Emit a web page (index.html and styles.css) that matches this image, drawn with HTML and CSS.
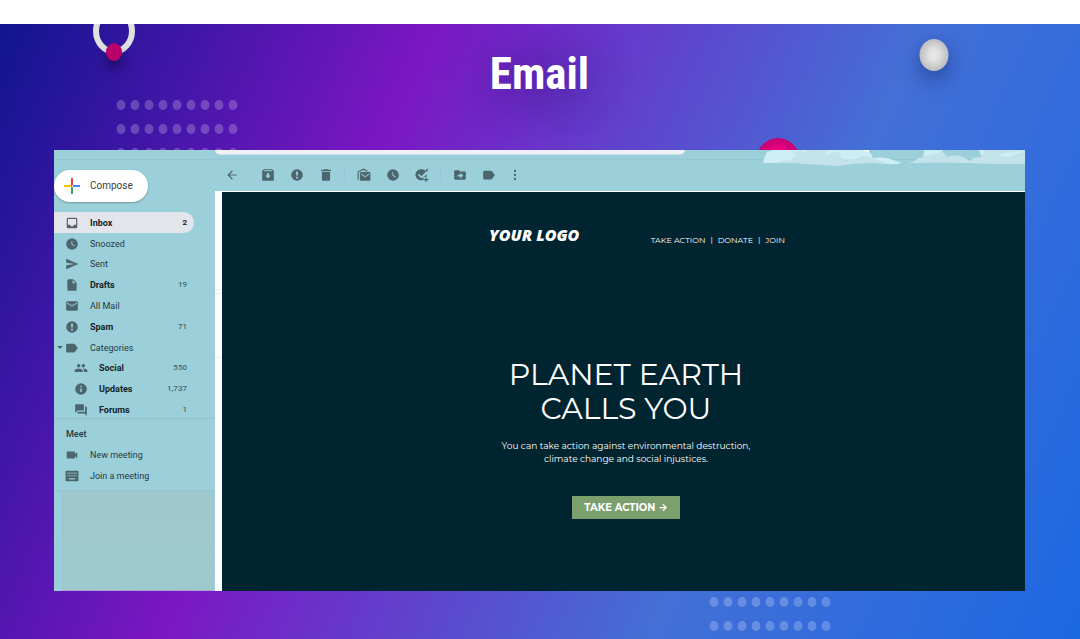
FILE: index.html
```html
<!DOCTYPE html>
<html lang="en">
<head>
<meta charset="utf-8">
<title>Email</title>
<link rel="stylesheet" href="styles.css">
</head>
<body>
<svg class="defs" aria-hidden="true">
  <defs>
    <symbol id="clock" viewBox="0 0 24 24"><path d="M12 2a10 10 0 1 0 0 20 10 10 0 0 0 0-20zm4.2 14.2L11 13V7h1.5v5.2l4.5 2.7z"/></symbol>
    <symbol id="alert" viewBox="0 0 24 24"><path d="M12 2a10 10 0 1 0 0 20 10 10 0 0 0 0-20zm1.500 16h-3v-3h3zm0-5h-3V6h3z"/></symbol>
    <symbol id="label" viewBox="0 0 24 24"><path d="M17 5.500A2 2 0 0 0 15.500 4.500H4a2 2 0 0 0-2 2v11a2 2 0 0 0 2 2h11.500c.6 0 1.200-.3 1.500-.8L22 12z"/></symbol>
    <pattern id="dots" width="14" height="24" patternUnits="userSpaceOnUse"><ellipse cx="5" cy="5" rx="4.400" ry="5" fill="#fff" fill-opacity=".22"/></pattern>
    <radialGradient id="pearl"><stop offset="0" stop-color="#eaeaea"/><stop offset=".4" stop-color="#dedede"/><stop offset="1" stop-color="#bdbdbd"/></radialGradient>
    <radialGradient id="ruby"><stop offset="0" stop-color="#ff008c"/><stop offset=".5" stop-color="#ed0084"/><stop offset="1" stop-color="#c20070"/></radialGradient>
  </defs>
</svg>
<main class="banner">
  <svg class="deco ring" width="60" height="60" viewBox="0 0 60 60" aria-hidden="true"><ellipse cx="30" cy="7" rx="18" ry="20.500" fill="none" stroke="#e0e0e0" stroke-width="6"/><ellipse class="drop" cx="30" cy="28" rx="8" ry="9" fill="#b80069"/></svg>
  <svg class="deco dots-top" width="126" height="60" aria-hidden="true"><rect width="126" height="60" fill="url(#dots)"/></svg>
  <svg class="deco dots-bottom" width="126" height="36" aria-hidden="true"><rect width="126" height="36" fill="url(#dots)"/></svg>
  <svg class="deco pearl" width="30" height="34" viewBox="0 0 30 34" aria-hidden="true"><ellipse cx="15" cy="17" rx="14.500" ry="16" fill="url(#pearl)"/></svg>
  <svg class="deco ruby" width="44" height="44" viewBox="0 0 44 44" aria-hidden="true"><ellipse cx="22" cy="22" rx="21.500" ry="22" fill="url(#ruby)"/></svg>
  <h1 class="title">Email</h1>

  <div class="app">
    <svg class="clouds" width="262" height="17" viewBox="0 0 262 17" aria-hidden="true">
      <path fill="#cceef4" d="M0 13Q1 7 4 2L10 0H105Q108 3 110 8Q118 7 124 8L139 13Q132 15 127 14L110 13H27z"/>
      <path fill="#c3e2e9" d="M10 13Q16 13 20 11Q31 10 32 4L28 2L39 1Q43 2 43 6V0H64L63 6Q67 2 74 2Q79 4 78 8Q84 10 90 9Q98 9 99 5L109 8L124 13L110 13Q92 13 74 16Q44 14 27 13z"/>
      <path fill="#fff" d="M99 0h7v2z"/>
      <path fill="#c3e2e9" d="M146 13L152 11Q153 8 160 7Q162 3 161 0H177Q183 4 184 7Q194 3 202 8L207 11L210 8Q214 7 219 7Q217 4 216 0H262V14H232Q190 12 146 13z"/>
      <path fill="#cceef4" d="M160 7L162 0H180L177 3Q168 4 160 7zM234 5Q248 1 262 1Q244 9 236 6zM216 0h6l-3 6z"/>
    </svg>

    <aside class="sidebar">
      <button class="compose" type="button">
        <svg width="16" height="16" viewBox="0 0 16 16" aria-hidden="true"><path fill="#ea4335" d="M7 0h2v7H7z"/><path fill="#fbbc04" d="M0 7h7v2H0z"/><path fill="#4285f4" d="M9 7h7v2H9z"/><path fill="#34a853" d="M7 9h2v7H7z"/><path fill="#ea4335" d="M7 7h2L7 9z"/></svg>
        <span>Compose</span>
      </button>
      <nav class="folders" aria-label="Folders">
        <a class="row active strong" href="#inbox"><svg class="icon" viewBox="0 0 24 24"><path d="M19 3H5a2 2 0 0 0-2 2v14a2 2 0 0 0 2 2h14a2 2 0 0 0 2-2V5a2 2 0 0 0-2-2zm0 12h-4a3 3 0 0 1-6 0H5V5h14z"/></svg><span>Inbox</span><span class="count">2</span></a>
        <a class="row" href="#snoozed"><svg class="icon"><use href="#clock"/></svg><span>Snoozed</span></a>
        <a class="row" href="#sent"><svg class="icon" viewBox="0 0 24 24"><path d="M2 21l21-9L2 3v7l15 2-15 2z"/></svg><span>Sent</span></a>
        <a class="row strong" href="#drafts"><svg class="icon" viewBox="0 0 24 24"><path d="M6 2a2 2 0 0 0-2 2v16c0 1.100.9 2 2 2h12a2 2 0 0 0 2-2V8l-6-6zm7 7V3.500L18.500 9z"/></svg><span>Drafts</span><span class="count">19</span></a>
        <a class="row" href="#all"><svg class="icon" viewBox="0 0 24 24"><path d="M20 4H4a2 2 0 0 0-2 2v12c0 1.100.9 2 2 2h16a2 2 0 0 0 2-2V6a2 2 0 0 0-2-2zm0 4l-8 5-8-5V6l8 5 8-5z"/></svg><span>All Mail</span></a>
        <a class="row strong" href="#spam"><svg class="icon"><use href="#alert"/></svg><span>Spam</span><span class="count">71</span></a>
        <a class="row parent" href="#categories"><svg class="icon"><use href="#label"/></svg><span>Categories</span></a>
        <a class="row strong child" href="#social"><svg class="icon" viewBox="0 0 24 24"><path d="M16 11a3 3 0 1 0 0-6 3 3 0 0 0 0 6zm-8 0a3 3 0 1 0 0-6 3 3 0 0 0 0 6zm0 2c-2.300 0-7 1.200-7 3.500V19h14v-2.500C15 14.200 10.300 13 8 13zm8 0h-1c1.200.8 2 2 2 3.500V19h6v-2.500c0-2.300-4.700-3.500-7-3.500z"/></svg><span>Social</span><span class="count">550</span></a>
        <a class="row strong child" href="#updates"><svg class="icon" viewBox="0 0 24 24"><path d="M12 2a10 10 0 1 0 0 20 10 10 0 0 0 0-20zm1.300 15h-2.600v-6h2.600zm0-8h-2.600V6.500h2.600z"/></svg><span>Updates</span><span class="count">1,737</span></a>
        <a class="row strong child" href="#forums"><svg class="icon" viewBox="0 0 24 24"><path d="M21 6h-2v9H6v2c0 .6.4 1 1 1h11l4 4V7c0-.6-.4-1-1-1zm-4 6V3c0-.6-.4-1-1-1H3c-.6 0-1 .4-1 1v14l4-4h10c.6 0 1-.4 1-1z"/></svg><span>Forums</span><span class="count">1</span></a>
      </nav>
      <section class="meet">
        <h2>Meet</h2>
        <a class="row" href="#new"><svg class="icon" viewBox="0 0 24 24"><path d="M17 10.500V6H3v12h14v-4.500l4 4v-11z"/></svg><span>New meeting</span></a>
        <a class="row" href="#join"><svg class="icon" viewBox="0 0 24 24"><path fill-rule="evenodd" d="M2 3h20l1 1v16l-1 1H2l-1-1V4zm2 3v2h2V6zm3.500 0v2h2V6zm3.500 0v2h2V6zm3.500 0v2h2V6zM18 6v2h2V6zM4 10.500v2h2v-2zm3.500 0v2h2v-2zm3.500 0v2h2v-2zm3.500 0v2h2v-2zm3.500 0v2h2v-2zM7 16v2h10v-2z"/></svg><span>Join a meeting</span></a>
      </section>
      <div class="chat"></div>
    </aside>

    <section class="viewer">
      <div class="search"></div>
      <div class="toolbar">
        <button class="tool back" type="button" aria-label="Back"><svg viewBox="0 0 24 24"><path d="M20 11H7.800l5.600-5.600L12 4l-8 8 8 8 1.400-1.400L7.800 13H20z"/></svg></button>
        <div class="group">
          <button class="tool" type="button" aria-label="Archive"><svg viewBox="0 0 24 24"><path fill-rule="evenodd" d="M5 2h14l3 3v15a2 2 0 0 1-2 2H4a2 2 0 0 1-2-2V5zM5.500 4l-1 1.500h15L18.500 4zM10 9v4H7l5 5 5-5h-3V9z"/></svg></button>
          <button class="tool" type="button" aria-label="Report spam"><svg><use href="#alert"/></svg></button>
          <button class="tool" type="button" aria-label="Delete"><svg viewBox="0 0 24 24"><path d="M5 7v13a2 2 0 0 0 2 2h10a2 2 0 0 0 2-2V7zM20.500 3H16l-1-1H9L8 3H3.500v2.500h17z"/></svg></button>
        </div>
        <div class="group">
          <button class="tool" type="button" aria-label="Mark as unread"><svg viewBox="0 0 24 24"><path d="M22 7H7a2 2 0 0 0-2 2v11c0 1.100.9 2 2 2h14a2 2 0 0 0 2-2V9a2 2 0 0 0-1-2zm-1 4l-7 5-7-5V9l7 5 7-5zM1 20V6l10-5 9 4.500h-4L11 3.500 3 7v13z"/></svg></button>
          <button class="tool" type="button" aria-label="Snooze"><svg><use href="#clock"/></svg></button>
          <button class="tool" type="button" aria-label="Add to tasks"><svg viewBox="0 0 24 24"><path d="M10.500 2a9.500 9.500 0 1 0 4 18v-5h5.300a9.500 9.500 0 0 0 .2-4l-9 7-6-6 2-2 4 4 8-8A9.500 9.500 0 0 0 10.500 2zM21 1l2 2-4 4-1.500-2zM18 16h2v3h3v2h-3v3h-2v-3h-3v-2h3z"/></svg></button>
        </div>
        <div class="group">
          <button class="tool" type="button" aria-label="Move to"><svg viewBox="0 0 24 24"><path fill-rule="evenodd" d="M4 4h6l2 2h8a2 2 0 0 1 2 2v10a2 2 0 0 1-2 2H4a2 2 0 0 1-2-2V6a2 2 0 0 1 2-2zm4 7.500v3h4.500V18l5-5-5-5v3.500z"/></svg></button>
          <button class="tool" type="button" aria-label="Labels"><svg><use href="#label"/></svg></button>
          <button class="tool more" type="button" aria-label="More"><svg viewBox="5 0 14 24"><path d="M12 7a2 2 0 1 0 0-4 2 2 0 0 0 0 4zm0 3a2 2 0 1 0 0 4 2 2 0 0 0 0-4zm0 7a2 2 0 1 0 0 4 2 2 0 0 0 0-4z"/></svg></button>
        </div>
      </div>
      <div class="page">
        <article class="mail">
          <div class="column">
            <header class="mast">
              <div class="logo">YOUR LOGO</div>
              <nav class="links" aria-label="Newsletter"><a href="#action">TAKE ACTION</a><span>|</span><a href="#donate">DONATE</a><span>|</span><a href="#joinus">JOIN</a></nav>
            </header>
            <h2 class="headline">PLANET EARTH<br>CALLS YOU</h2>
            <p class="lead">You can take action against environmental destruction,<br>climate change and social injustices.</p>
            <a class="cta" href="#action">TAKE ACTION <span class="arrow">→</span></a>
          </div>
        </article>
      </div>
    </section>
  </div>
</main>
</body>
</html>
```
FILE: styles.css
```css
* { box-sizing: border-box; }

body {
  margin: 0;
  padding: 24px 0 0;
  background: #fff;
  font-family: Roboto, "Liberation Sans", sans-serif;
  font-size: 10px;
  line-height: 14px;
}

a { color: inherit; text-decoration: none; }
button { border: 0; padding: 0; background: none; color: inherit; font: inherit; }
.defs { position: absolute; width: 0; height: 0; }

.banner {
  position: relative;
  overflow: hidden;
  padding: 0 55px 48px 54px;
  background: linear-gradient(114deg, #10158f 0%, #7b17c3 32%, #446fd6 68%, #1c68e3 100%);
}

.deco { position: absolute; overflow: visible; }
.ring { top: 0; left: 84px; }
.drop { filter: drop-shadow(0 8px 6px rgba(0, 0, 0, .4)); }
.dots-top { top: 76px; left: 116px; }
.dots-bottom { bottom: 6px; left: 709px; height: 36px; }
.pearl { top: 14px; right: 131px; filter: drop-shadow(0 8px 10px rgba(0, 0, 50, .35)); }
.ruby { top: 114px; right: 280px; }

.title {
  position: relative;
  margin: 0;
  height: 126px;
  padding-top: 23px;
  color: #fff;
  font: 700 45px/54px "Roboto Condensed", "Liberation Sans Narrow", Roboto, sans-serif;
  text-align: center;
  text-shadow: 0 6px 40px rgba(20, 0, 80, .5);
}

.app {
  position: relative;
  display: grid;
  grid-template-columns: 161px 1fr;
  background: #9bd0da;
  color: #263a40;
}
.app::before {
  content: "";
  position: absolute;
  top: 9px;
  left: 0;
  right: 0;
  height: 1px;
  background: #94c7d1;
}
.clouds { position: absolute; top: 0; right: 0; }

.sidebar { display: flex; flex-direction: column; padding-top: 20px; }
.compose {
  display: flex;
  align-items: center;
  gap: 10px;
  width: 94px;
  height: 32px;
  margin-bottom: 10px;
  padding-left: 10px;
  border-radius: 16px;
  background: #fff;
  color: #3c4043;
  box-shadow: 0 1px 2px rgba(60, 64, 67, .4);
}
.folders { display: grid; grid-auto-rows: 1fr; height: 208px; font-size: 9px; }
.row {
  position: relative;
  display: flex;
  align-items: center;
  gap: 11px;
  margin-right: 21px;
  padding: 1px 7px 0 11px;
}
.icon { width: 14px; height: 14px; fill: #4b666d; }
.strong { font-weight: 700; color: #142327; }
.count { margin-left: auto; font-size: 8px; font-weight: 500; color: #4b666d; }
.active { border-radius: 0 11px 11px 0; background: #e2e6ea; }
.active .count { font-weight: 700; color: #202124; }
.active .icon { fill: #5f6368; }
.child { padding-left: 20px; }
.parent::before {
  content: "";
  position: absolute;
  left: 3px;
  border: 3px solid transparent;
  border-top-color: #4b666d;
  border-bottom: 0;
}

.meet {
  display: grid;
  grid-template-rows: 25px 21px 21px;
  margin-top: -2px;
  padding-bottom: 4px;
  border-top: 1px solid #91c2cc;
  border-bottom: 1px solid #94c6d0;
  font-size: 9px;
}
.meet h2 { margin: 0; padding: 8px 0 0 12px; font-size: 9px; font-weight: 500; line-height: 14px; }
.chat {
  flex: 1;
  margin: 0 1px 0 7px;
  background: linear-gradient(#9fc8ce, #9dc9cf);
  border-bottom: 1px solid #a9a5cf;
}

.viewer { display: flex; flex-direction: column; min-width: 0; }
.search { width: 58%; height: 5px; border-radius: 0 0 6px 6px; background: #eff1f5; border-bottom: 1px solid #c7e0e9; position: relative; }
.toolbar { display: flex; align-items: center; height: 36px; padding: 4px 0 0 10px; }
.back { margin-right: 22px; }
.group { display: flex; gap: 15px; }
.group + .group { margin-left: 11px; padding-left: 12px; border-left: 1px solid #93c8d5; }
.tool { display: block; width: 14px; height: 14px; }
.tool svg { display: block; width: 100%; height: 14px; fill: #4b666d; }
.more { width: 8px; }

.page {
  padding: 1px 0 0 7px;
  background: linear-gradient(#fff 98px, #eee 98px 99px, #fff 99px 102px, #eee 102px 103px, #fff 103px 166px, #eee 166px 167px, #fff 167px);
}
.mail {
  padding: 33px 0 72px 5px;
  background: #002530;
  color: #fff;
  font-family: Montserrat, Inter, "Open Sans", sans-serif;
}
.column { display: flex; flex-direction: column; align-items: center; max-width: 318px; margin: 0 auto; }
.mast { display: flex; justify-content: space-between; align-items: flex-end; width: 100%; height: 20px; padding-left: 22px; }
.logo { font: italic 800 16px/20px "Permanent Marker", "Open Sans", sans-serif; }
.links { display: flex; gap: 5px; font-size: 8px; line-height: 10px; }
.headline { margin: 113px 0 0; font-size: 30px; font-weight: 400; line-height: 34px; text-align: center; white-space: nowrap; }
.lead { margin: 13px 0 0; font-size: 9px; line-height: 13px; font-weight: 400; text-align: center; white-space: nowrap; }
.cta { margin-top: 31px; padding: 0 12px; background: #7c9f6e; font-size: 10px; font-weight: 700; line-height: 23px; white-space: nowrap; }
.arrow { font-family: Inter, "DejaVu Sans", sans-serif; }
```
